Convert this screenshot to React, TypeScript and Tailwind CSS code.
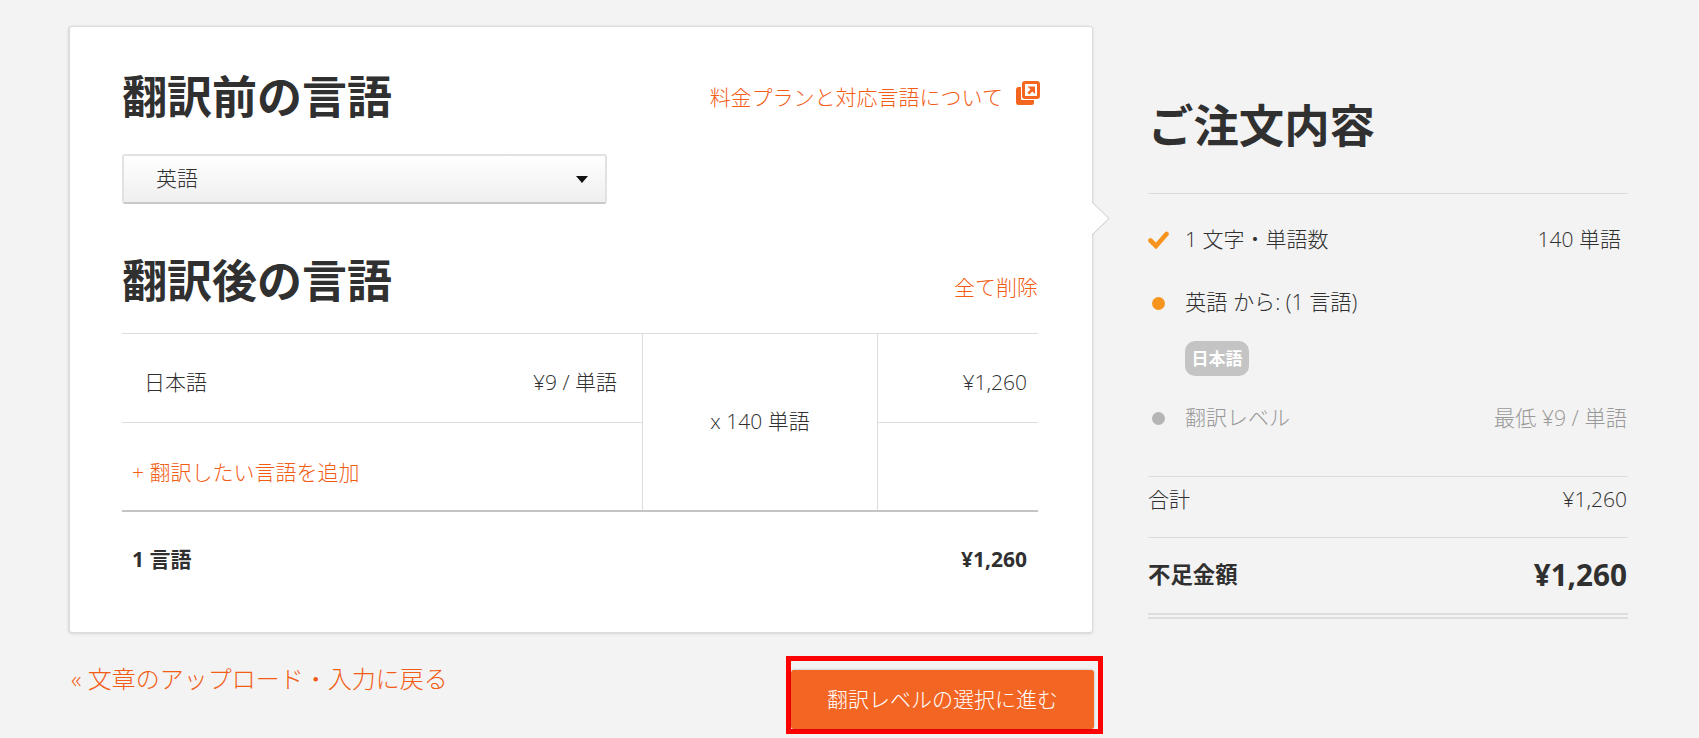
export default function App() {
  const font = "font-['Open_Sans','Noto_Sans_CJK_JP',sans-serif]";
  return (
    <div className={`min-h-screen h-[738px] overflow-hidden bg-[#f3f3f3] text-[#303030] text-[21px] font-light ${font}`}>
      <div className="flex pl-[69px] pt-[26px]">
        <div className="w-[1024px] shrink-0">
          <div className="relative h-[607px] rounded-[3px] border border-[#dcdcdc] bg-white pl-[52px] pr-[54px] pt-[40px] shadow-[-1px_0_2px_rgba(0,0,0,0.08),0_1px_3px_rgba(0,0,0,0.1)]">
            <svg className="absolute left-[1022px] top-[174px]" width="18" height="35" viewBox="0 0 18 35">
              <path d="M0 1 L17 17.5 L0 34 Z" fill="#fff" />
              <path d="M0 1 L17 17.5 L0 34" fill="none" stroke="#c8c8c8" strokeWidth="1" />
            </svg>
            <div className="flex h-[60px] items-center justify-between">
              <h1 className="text-[45px] font-bold leading-[60px]">翻訳前の言語</h1>
              <a className="flex items-center text-[#f25c14]">
                <span className="mt-[2px]">料金プランと対応言語について</span>
                <svg className="ml-[13px] mr-[-2px] -mt-[8px]" width="24" height="24" viewBox="0 0 24 24">
                  <rect x="6" y="0" width="18" height="18" rx="3" fill="#f4651f" />
                  <path d="M2.5 6H5v12a1 1 0 0 0 1 1H18V21.5a2.5 2.5 0 0 1-2.5 2.5H2.5A2.5 2.5 0 0 1 0 21.5V8.5A2.5 2.5 0 0 1 2.5 6Z" fill="#f4651f" />
                  <path d="M9 3h12v12H9z" fill="#fff" />
                  <path d="M11.5 5.5h7.5v7.5l-2.6-2.6-3.2 3.2-1.9-1.9 3.2-3.2Z" fill="#f4651f" />
                </svg>
              </a>
            </div>
            <div className="mt-[27px] flex h-[50px] w-[485px] items-center justify-between rounded-[3px] border-2 border-[#e2e2e2] border-b-[#c8c8c8] bg-gradient-to-b from-white to-[#efefef] pl-[32px] pr-[17px]">
              <span>英語</span>
              <svg width="12" height="7" viewBox="0 0 12 7"><path d="M0 0h12L6 7Z" fill="#111" /></svg>
            </div>
            <div className="mt-[47px] flex h-[60px] items-center justify-between">
              <h2 className="text-[45px] font-bold leading-[60px]">翻訳後の言語</h2>
              <a className="mt-[14px] text-[#f25c14]">全て削除</a>
            </div>
            <div className="mt-[22px] grid w-[916px] grid-cols-[520px_236px_160px] grid-rows-[89px_87px] border-t border-b-2 border-t-[#dcdcdc] border-b-[#c4c4c4]">
              <div className="flex items-center justify-between border-b border-[#dcdcdc] pl-[22px] pr-[25px] pt-[9px]">
                <span>日本語</span>
                <span>¥9 / 単語</span>
              </div>
              <div className="row-span-2 flex items-center justify-center border-x border-[#dcdcdc]">x 140 単語</div>
              <div className="flex items-center justify-end border-b border-[#dcdcdc] pr-[11px] pt-[9px]">¥1,260</div>
              <div className="flex items-center pl-[10px] pt-[12px] text-[#f25c14]">+ 翻訳したい言語を追加</div>
              <div></div>
            </div>
            <div className="flex h-[30px] mt-[33px] items-center justify-between pl-[10px] pr-[11px] font-bold">
              <span>1 言語</span>
              <span>¥1,260</span>
            </div>
          </div>
          <div className="mt-[23px] flex items-start justify-between">
            <a className="mt-[7px] pl-[2px] text-[24px] leading-[32px] text-[#f25c14]">« 文章のアップロード・入力に戻る</a>
            <div className="mr-[-10px] h-[78px] w-[317px] border-[5px] border-[#ff0000] pr-[4px] pt-[9px]">
              <button className="flex h-[59px] w-full items-center justify-center rounded-[3px] bg-[#f36523] text-[21px] text-white shadow-[0_0_3px_rgba(0,0,0,0.25)]">
                翻訳レベルの選択に進む
              </button>
            </div>
          </div>
        </div>
        <aside className="ml-[55px] w-[480px] shrink-0 pt-[69px]">
          <h2 className="text-[45.4px] font-bold leading-[60px]">ご注文内容</h2>
          <div className="mt-[38px] border-t border-[#dcdcdc]" />
          <div className="mt-[31px] flex h-[30px] items-center justify-between pr-[7px]">
            <div className="flex items-center">
              <svg width="21" height="18" viewBox="0 0 21 18" className="mr-[16px]">
                <path d="M2.5 9.5 L8 15 L18.5 3" fill="none" stroke="#f7941d" strokeWidth="4.6" strokeLinecap="round" strokeLinejoin="miter" />
              </svg>
              <span>1 文字・単語数</span>
            </div>
            <span>140 単語</span>
          </div>
          <div className="mt-[32px] flex h-[30px] items-center">
            <span className="ml-[4px] mr-[20px] mt-[2px] h-[13px] w-[13px] rounded-full bg-[#f7941d]" />
            <span className="text-[21.2px]">英語 から: (1 言語)</span>
          </div>
          <div className="mt-[24px] ml-[37px] flex h-[35px] w-[64px] items-center justify-center rounded-[10px] bg-[#c4c4c4] text-[17px] font-bold text-white">日本語</div>
          <div className="mt-[27px] flex h-[30px] items-center justify-between pr-px text-[#999]">
            <div className="flex items-center">
              <span className="ml-[4px] mr-[20px] h-[13px] w-[13px] rounded-full bg-[#b5b5b5]" />
              <span>翻訳レベル</span>
            </div>
            <span className="text-[21.3px]">最低 ¥9 / 単語</span>
          </div>
          <div className="mt-[43px] border-t border-[#dcdcdc]" />
          <div className="mt-[8px] flex h-[30px] items-center justify-between pr-px">
            <span>合計</span>
            <span>¥1,260</span>
          </div>
          <div className="mt-[22px] border-t border-[#dcdcdc]" />
          <div className="mt-[22px] flex h-[30px] items-center justify-between pr-px font-bold">
            <span className="text-[22.4px]">不足金額</span>
            <span className="text-[29.7px]">¥1,260</span>
          </div>
          <div className="mt-[23px] h-[6px] border-y-2 border-[#dedede]" />
        </aside>
      </div>
    </div>
  );
}
